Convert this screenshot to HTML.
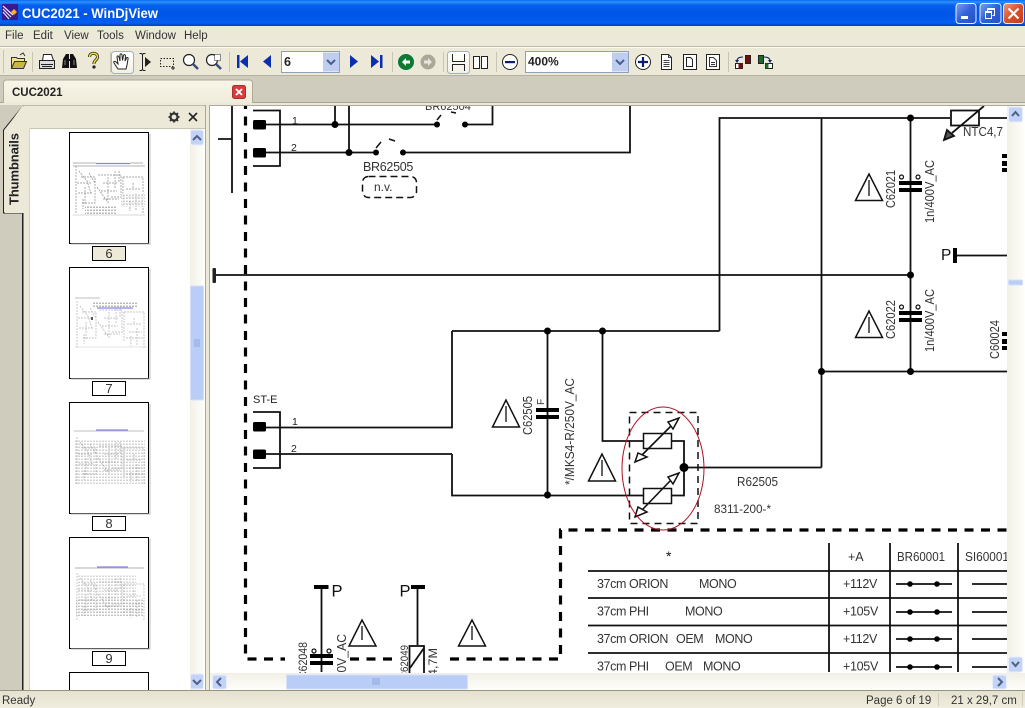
<!DOCTYPE html>
<html><head><meta charset="utf-8"><title>CUC2021 - WinDjView</title>
<style>
html,body{margin:0;padding:0;background:#ECE9D8;overflow:hidden;width:1025px;height:708px}
svg{display:block;font-family:"Liberation Sans",sans-serif;filter:blur(.3px)}
</style></head><body>
<svg width="1025" height="708" viewBox="0 0 1025 708" xmlns="http://www.w3.org/2000/svg">
<defs>
<linearGradient id="tb" x1="0" y1="0" x2="0" y2="1"><stop offset="0" stop-color="#0A6AF0"/><stop offset=".08" stop-color="#2B90FF"/><stop offset=".2" stop-color="#0560EC"/><stop offset=".55" stop-color="#0054E6"/><stop offset=".88" stop-color="#0160F2"/><stop offset="1" stop-color="#0040B0"/></linearGradient>
<linearGradient id="wb" x1="0" y1="0" x2="1" y2="1"><stop offset="0" stop-color="#7CA0EE"/><stop offset=".5" stop-color="#2F60D8"/><stop offset="1" stop-color="#2350C8"/></linearGradient>
<linearGradient id="wr" x1="0" y1="0" x2="1" y2="1"><stop offset="0" stop-color="#EE9A80"/><stop offset=".5" stop-color="#D8502A"/><stop offset="1" stop-color="#C23A18"/></linearGradient>
<linearGradient id="sv" x1="0" y1="0" x2="1" y2="0"><stop offset="0" stop-color="#F2F0E6"/><stop offset="1" stop-color="#FEFEFB"/></linearGradient>
<linearGradient id="sh" x1="0" y1="0" x2="0" y2="1"><stop offset="0" stop-color="#F2F0E6"/><stop offset="1" stop-color="#FEFEFB"/></linearGradient>
<linearGradient id="st" x1="0" y1="0" x2="0" y2="1"><stop offset="0" stop-color="#E4E1CF"/><stop offset="1" stop-color="#F0EDDE"/></linearGradient>
<linearGradient id="tab" x1="0" y1="0" x2="0" y2="1"><stop offset="0" stop-color="#F8F5E8"/><stop offset="1" stop-color="#EFECDB"/></linearGradient>
<linearGradient id="btn" x1="0" y1="0" x2="0" y2="1"><stop offset="0" stop-color="#FFFFFF"/><stop offset="1" stop-color="#F2F0E4"/></linearGradient>
<clipPath id="doc"><rect x="210" y="106" width="797" height="567"/></clipPath>
<clipPath id="list"><rect x="30" y="128" width="160" height="562"/></clipPath>
<pattern id="sp" width="3" height="3" patternUnits="userSpaceOnUse"><rect width="3" height="3" fill="#fff"/><path d="M0 .5H2M1 2V3" stroke="#999" stroke-width=".7"/></pattern>
<g id="core" fill="none" stroke="#8a8a8a" stroke-width=".7" stroke-dasharray="2 1">
<path d="M3 3V50M6 8L14 18 18 30M8 14H22V40H8M25 12H48V32M30 20H44M35 14V40M42 8V26M50 14V44M50 14H70V50M53 26H68M55 34H68M57 38V48M63 30V48M5 30H20M10 36V46M24 24L34 38M38 34H50M4 20H18M12 24V42M28 28H44M30 36H46M46 8V20M60 20V26M16 10L22 20M52 40H70"/>
</g>
</defs>

<rect width="1025" height="708" fill="#ECE9D8"/>

<!-- title bar -->
<rect width="1025" height="26" fill="url(#tb)"/>
<rect x="2" y="4" width="16" height="16" fill="#3A1A90"/>
<path d="M3 6L13 15M3 9L11 17M3 12L9 19" stroke="#E8E0FF" stroke-width="1.2" fill="none"/>
<path d="M14 9l3 3-3 3-3-3z" fill="#FFB020"/>
<text x="22" y="18" font-size="14" font-weight="bold" fill="#fff" textLength="136" lengthAdjust="spacingAndGlyphs">CUC2021 - WinDjView</text>
<rect x="956" y="3.500" width="20" height="20" rx="3" fill="url(#wb)" stroke="#E8EEFC"/>
<rect x="961" y="16" width="7" height="3" fill="#fff"/>
<rect x="980" y="3.500" width="21" height="20" rx="3" fill="url(#wb)" stroke="#E8EEFC"/>
<path d="M987.500 8.500h7v7h-2M985.500 11.500h6v7h-6zM985.500 12.500h6M987.500 8.500v3M987.500 9.500h7" fill="none" stroke="#fff"/>
<rect x="1003.500" y="3.500" width="20" height="20" rx="3" fill="url(#wr)" stroke="#F5E8E0"/>
<path d="M1008.500 8.500l10 10M1018.500 8.500l-10 10" stroke="#fff" stroke-width="2.200"/>

<!-- menu -->
<g font-size="11.500" fill="#333">
<text x="5" y="39">File</text><text x="33" y="39">Edit</text><text x="64" y="39">View</text><text x="97" y="39">Tools</text><text x="135" y="39">Window</text><text x="184" y="39">Help</text>
</g>

<!-- toolbar -->
<rect x="0" y="46" width="1025" height="1" fill="#BDB9A8"/>
<rect x="0" y="47" width="1025" height="1" fill="#FBFAF4"/>
<rect x="0" y="75" width="1025" height="1" fill="#B5B2A2"/>
<rect x="3" y="50" width="1" height="23" fill="#C8C4B2"/>
<g fill="#C8C5B2">
<rect x="32" y="52" width="1" height="20"/><rect x="110" y="52" width="1" height="20"/><rect x="229" y="52" width="1" height="20"/><rect x="392" y="52" width="1" height="20"/><rect x="443" y="52" width="1" height="20"/><rect x="496" y="52" width="1" height="20"/><rect x="728" y="52" width="1" height="20"/>
</g>
<!-- open -->
<path d="M11.500 68.500v-11h5l1 1h7v3" fill="#F5E58A" stroke="#333"/><path d="M11.500 68.500l3-7h12l-3 7z" fill="#C8B840" stroke="#333"/><path d="M20 55l3-2 2 3" fill="none" stroke="#333"/>
<!-- print -->
<path d="M39.500 60.500h15v8h-15z" fill="#ddd" stroke="#222"/><path d="M42.500 60.500l1-6h8l2 6z" fill="#fff" stroke="#222"/><path d="M41 64.500h12M42 66.500h10" stroke="#222"/>
<!-- binoc -->
<path d="M62 68l1-9 3-5h3v14zM70 68V54h3l3 5 1 9z" fill="#111"/><path d="M68 60h3" stroke="#111" stroke-width="2"/><path d="M65 60v5M74 60v5" stroke="#888"/>
<!-- help -->
<path d="M89.500 57c0-5 8-5 8 0 0 3-3 3-3.500 6v1" fill="none" stroke="#222" stroke-width="3"/><path d="M89.500 57c0-5 8-5 8 0 0 3-3 3-3.500 6v1" fill="none" stroke="#F2DE2E" stroke-width="1.500"/><circle cx="94" cy="67" r="1.600" fill="#222"/>
<!-- hand button -->
<rect x="111.500" y="51.500" width="22" height="22" rx="3" fill="url(#btn)" stroke="#9FB0C8"/>
<path d="M118 69l-4-6c-1-2 1-2 2-1l2 2-1-7c0-1.500 1.500-1.500 2 0l1 4 0-6c0-1.500 2-1.500 2 0l.5 5.500 1-5c.3-1.500 2-1 2 .5l-.5 5 1.500-3c.5-1 2-.5 1.500 1l-1 6-1 4z" fill="#fff" stroke="#222"/>
<!-- text select -->
<path d="M139.500 53.500h2l1 1 1-1h2M142.500 54.500v15M139.500 70.500h2l1-1 1 1h2" fill="none" stroke="#222"/><path d="M145 57l6 5-6 5z" fill="#222"/>
<!-- rect select -->
<rect x="160.500" y="58.500" width="13" height="8" fill="none" stroke="#222" stroke-dasharray="1.500 1.500"/><path d="M171 68h4M173 66v4" stroke="#222"/>
<!-- zoom -->
<circle cx="189" cy="60" r="5.500" fill="#fff" stroke="#222" stroke-width="1.200"/><path d="M193 64l5 5" stroke="#3C4E7A" stroke-width="2.500"/>
<!-- zoom rect -->
<circle cx="212" cy="60" r="5.500" fill="#fff" stroke="#222" stroke-width="1.200"/><path d="M216 64l5 5" stroke="#3C4E7A" stroke-width="2.500"/><rect x="214.500" y="54.500" width="6" height="6" fill="#fff" stroke="#222" stroke-dasharray="1 1"/>
<!-- nav -->
<g fill="#0A2FB0">
<rect x="237" y="55" width="2.500" height="13"/><path d="M248 55v13l-8-6.500z"/>
<path d="M271 55v13l-8-6.500z"/>
<path d="M350 55v13l8-6.500z"/>
<path d="M371 55v13l8-6.500z"/><rect x="380" y="55" width="2.500" height="13"/>
</g>
<!-- page combo -->
<rect x="281.500" y="51.500" width="58" height="21" fill="#fff" stroke="#8FA0B8"/>
<text x="284" y="66" font-size="12.500" font-weight="bold" fill="#222">6</text>
<rect x="323" y="52.500" width="16" height="19" fill="#BFCEF0"/><path d="M327 60l4 4 4-4" fill="none" stroke="#4A5F90" stroke-width="2"/>
<!-- green / grey -->
<circle cx="406" cy="62" r="7.500" fill="#0F7A2E" stroke="#074"/><path d="M402 62l4-4v2.500h4v3h-4V66z" fill="#fff"/>
<circle cx="428" cy="62" r="7.500" fill="#ABA89A"/><path d="M432 62l-4-4v2.500h-4v3h4V66z" fill="#E8E6DC"/>
<!-- continuous button -->
<rect x="447.500" y="51.500" width="22" height="22" rx="3" fill="url(#btn)" stroke="#9FB0C8"/>
<path d="M452.500 54v7.500h12V54M452.500 71v-6.500h12V71" fill="none" stroke="#222"/>
<rect x="473.500" y="56.500" width="6" height="12" fill="#fff" stroke="#222"/><rect x="481.500" y="56.500" width="6" height="12" fill="#fff" stroke="#222"/>
<!-- minus -->
<circle cx="510" cy="62" r="7.500" fill="#fff" stroke="#222"/><rect x="505" y="61" width="10" height="2.200" fill="#0A1F70"/>
<!-- zoom combo -->
<rect x="525.500" y="51.500" width="103" height="21" fill="#fff" stroke="#8FA0B8"/>
<text x="528" y="65.500" font-size="12" font-weight="bold" fill="#222">400%</text>
<rect x="612" y="52.500" width="16" height="19" fill="#BFCEF0"/><path d="M616 60l4 4 4-4" fill="none" stroke="#4A5F90" stroke-width="2"/>
<!-- plus -->
<circle cx="643" cy="62" r="7.500" fill="#fff" stroke="#222"/><path d="M638 62h10M643 57v10" stroke="#0A1F70" stroke-width="2.200"/>
<!-- docs -->
<path d="M661.500 54.500h7l3 3v12h-10z" fill="#fff" stroke="#222"/><path d="M668.500 54.500v3h3M663.500 60.500h6M663.500 62.500h6M663.500 64.500h6M663.500 66.500h6" fill="none" stroke="#444"/>
<rect x="683.500" y="54.500" width="13" height="15" fill="#fff" stroke="#222"/><path d="M686.500 57.500h4l2 2v7h-6z" fill="#fff" stroke="#222"/>
<rect x="706.500" y="54.500" width="13" height="15" fill="#fff" stroke="#222"/><path d="M709.500 57.500h4l3 3v6h-7zM711 62.500h4M711 64.500h4" fill="#fff" stroke="#333"/>
<!-- rotate -->
<rect x="745.500" y="55.500" width="5" height="8" fill="#6E1010" stroke="#222"/><rect x="735.500" y="63.500" width="7" height="5" fill="#fff" stroke="#222"/><rect x="738.500" y="63.500" width="4" height="5" fill="#6E1010"/><path d="M737 61c0-3 3-4 6-4" fill="none" stroke="#0A1F70"/><path d="M735 60h4l-2 3z" fill="#0A1F70"/>
<rect x="758.500" y="55.500" width="5" height="8" fill="#1A6A2A" stroke="#222"/><rect x="765.500" y="63.500" width="7" height="5" fill="#fff" stroke="#222"/><rect x="765.500" y="63.500" width="3" height="5" fill="#1A6A2A"/><path d="M764 57c3 0 6 1 6 4" fill="none" stroke="#0A1F70"/><path d="M768 60h4l-2 3z" fill="#0A1F70"/>

<!-- tab bar -->
<rect x="0" y="76" width="1025" height="27" fill="#CFCBBD"/>
<rect x="0" y="102" width="1025" height="1" fill="#A8A594"/>
<rect x="0" y="103" width="1025" height="3" fill="#ECE9D8"/>
<path d="M3.500 103v-20q0-3 3-3h243q3 0 3 3v20" fill="url(#tab)" stroke="#ADAA99"/>
<text x="12" y="96" font-size="11.500" font-weight="bold" fill="#222">CUC2021</text>
<rect x="232.500" y="85.500" width="13" height="13" rx="2" fill="#D83C3C" stroke="#A83030"/>
<path d="M236 89l6 6M242 89l-6 6" stroke="#fff" stroke-width="1.800"/>

<!-- sidebar -->
<rect x="0" y="105" width="206" height="585" fill="#ECE9D8"/>
<rect x="0" y="105" width="22" height="585" fill="#CFCBBD"/>
<rect x="22" y="213" width="1.500" height="477" fill="#222"/>
<path d="M23 106L3.500 130V213H22.500" fill="#ECE9D8" stroke="#222"/>
<path d="M23 105V213H5V130z" fill="#ECE9D8"/>
<text transform="translate(18.500,205) rotate(-90)" font-size="13" font-weight="bold" fill="#222" textLength="72">Thumbnails</text>
<rect x="22" y="105" width="184" height="1" fill="#BDB9A8"/>
<!-- gear -->
<circle cx="174" cy="117" r="3.500" fill="none" stroke="#333" stroke-width="2.200"/>
<path d="M174 111.500v2M174 120.500v2M168.500 117h2M177.500 117h2M170 113l1.500 1.500M178 113l-1.500 1.500M170 121l1.500-1.500M178 121l-1.500-1.500" stroke="#333" stroke-width="1.800"/>
<path d="M189 113l8 8M197 113l-8 8" stroke="#222" stroke-width="1.600"/>
<rect x="29" y="128" width="177" height="1" fill="#C8C5B4"/>
<rect x="30" y="129" width="160" height="561" fill="#fff"/>
<rect x="29" y="128" width="1" height="562" fill="#D6D3C2"/>
<g clip-path="url(#list)" font-size="13" fill="#333" text-anchor="middle">
<!-- 6 -->
<rect x="69.500" y="132.500" width="79" height="111" fill="#fff" stroke="#000"/><path d="M150 134v110H71" fill="none" stroke="#bbb"/>
<use href="#core" x="73" y="163"/>
<path d="M73 163H96M130 163H143M73 166H145" stroke="#999" stroke-width=".7"/><path d="M96 163.500H130" stroke="#8484EE" stroke-width="1.300"/>
<rect x="85" y="205" width="32" height="9" fill="url(#sp)" opacity=".9"/><path d="M73 215H145" stroke="#ccc" stroke-width=".8"/>
<rect x="121" y="193" width="24" height="14" fill="url(#sp)" opacity=".6"/>
<rect x="92.500" y="246.500" width="33" height="14" fill="#ECE9D8" stroke="#000"/><text x="109" y="258">6</text>
<!-- 7 -->
<rect x="69.500" y="267.500" width="79" height="111" fill="#fff" stroke="#000"/><path d="M150 269v110H71" fill="none" stroke="#bbb"/>
<g opacity=".65"><use href="#core" x="74" y="298"/></g>
<path d="M75 298H100" stroke="#aaa" stroke-width=".7"/><rect x="92" y="302" width="45" height="5" fill="url(#sp)" opacity=".9"/><path d="M97 308H133" stroke="#8484EE" stroke-width="1.200"/><rect x="91" y="317" width="2" height="3" fill="#555"/><path d="M75 347H147" stroke="#ddd" stroke-width=".8"/>
<rect x="92.500" y="381.500" width="33" height="14" fill="#fff" stroke="#000"/><text x="109" y="393">7</text>
<!-- 8 -->
<rect x="69.500" y="402.500" width="79" height="111" fill="#fff" stroke="#000"/><path d="M150 404v110H71" fill="none" stroke="#bbb"/>
<path d="M74 431H144" stroke="#aaa" stroke-width=".7"/><path d="M96 430H128" stroke="#8484EE" stroke-width="1.200"/>
<rect x="75" y="440" width="70" height="44" fill="url(#sp)" opacity=".55"/>
<g opacity=".7"><use href="#core" x="74" y="434"/></g>
<rect x="92.500" y="516.500" width="33" height="14" fill="#fff" stroke="#000"/><text x="109" y="528">8</text>
<!-- 9 -->
<rect x="69.500" y="537.500" width="79" height="111" fill="#fff" stroke="#000"/><path d="M150 539v110H71" fill="none" stroke="#bbb"/>
<path d="M75 568H144" stroke="#999" stroke-width=".7"/><path d="M97 567H128" stroke="#8484EE" stroke-width="1.300"/>
<rect x="78" y="574" width="58" height="24" fill="url(#sp)" opacity=".5"/><rect x="76" y="598" width="68" height="18" fill="url(#sp)" opacity=".75"/>
<g opacity=".6"><use href="#core" x="74" y="570"/></g>
<rect x="92.500" y="651.500" width="33" height="14" fill="#fff" stroke="#000"/><text x="109" y="663">9</text>

<rect x="69.500" y="672.500" width="79" height="30" fill="#fff" stroke="#000"/>
</g>
<!-- sidebar scrollbar -->
<rect x="190" y="129" width="15" height="561" fill="url(#sv)"/>
<rect x="190.500" y="130" width="13" height="15" rx="2" fill="#C3D3F8" stroke="#E8EEFC"/><path d="M193 140l4-4 4 4" fill="none" stroke="#4D6185" stroke-width="2"/>
<rect x="190.500" y="286" width="13" height="114" rx="1" fill="#B9CDF6" stroke="#D4E0FA"/>
<path d="M194 340h6M194 342h6M194 344h6M194 346h6" stroke="#8EA8DE"/>
<rect x="190.500" y="674" width="13" height="15" rx="2" fill="#C3D3F8" stroke="#E8EEFC"/><path d="M193 680l4 4 4-4" fill="none" stroke="#4D6185" stroke-width="2"/>
<rect x="205" y="105" width="1" height="585" fill="#ACA899"/>

<!-- document frame -->
<rect x="209" y="105" width="816" height="1" fill="#ACA899"/>
<rect x="209" y="105" width="1" height="585" fill="#ACA899"/>
<rect x="210" y="106" width="797" height="567" fill="#fff"/>

<!-- schematic -->
<g clip-path="url(#doc)" fill="none" stroke="#111" stroke-width="1.800">
<!-- dashed border -->
<path d="M245.500 100V659H285M350 659H392M450 659H560.500V530H1010" stroke="#000" stroke-width="3.200" stroke-dasharray="9 7.500"/>
<path d="M232 100V193M218 139H232"/>
<!-- top connector -->
<path d="M253 110.500H280V166H253" stroke-width="1.800"/>
<path d="M253 124.500H437M465 124.500H492.500V100M253 152.500H376M403 152.500H630V100M335 100V124.500M349 100V152.500"/>
<g fill="#000" stroke="none"><rect x="253" y="120" width="13" height="9.500" rx="1.500"/><rect x="253" y="148" width="13" height="9.500" rx="1.500"/>
<circle cx="335" cy="124.500" r="3.500"/><circle cx="349" cy="152.500" r="3.500"/><circle cx="437" cy="124.500" r="3"/><circle cx="465" cy="124.500" r="3"/><circle cx="376" cy="152.500" r="3"/><circle cx="403" cy="152.500" r="3"/></g>
<path d="M376 148l5-6M389 139l6 2M437 120l4-5M451 112l5 1" stroke-width="1.500"/>
<rect x="362.500" y="176.500" width="54" height="21" rx="6" stroke="#111" stroke-width="1.500" stroke-dasharray="7 4"/>
<!-- long horizontal -->
<path d="M214 275H910"/>
<rect x="212.500" y="268" width="3.500" height="15" fill="#222" stroke="none" rx="1"/>
<!-- main net -->
<path d="M719.500 331V118H950M980 118H1007M452 331H719.500M452 331V427.500H265M452 454V495.500H643M265 454H452M547.500 331V495.500M602.500 331V441H643M671 441H684V495.500H671M684 467.500H821.500M821.500 118V467.500M821.500 371.500H1007M910.500 118V371.500M956 255.500H1007"/>
<g fill="#000" stroke="none">
<circle cx="547.500" cy="331" r="3.500"/><circle cx="602.500" cy="331" r="3.500"/><circle cx="547.500" cy="495" r="3.500"/><circle cx="684" cy="467.500" r="4.500"/><circle cx="821.500" cy="371.500" r="3.500"/><circle cx="910.500" cy="371.500" r="3.500"/><circle cx="910.500" cy="118" r="3.500"/><circle cx="910.500" cy="275" r="3.500"/>
<rect x="953" y="248" width="4" height="15"/>
<rect x="253" y="422" width="13" height="9.500" rx="1.500"/><rect x="253" y="449.500" width="13" height="9.500" rx="1.500"/>
<rect x="899" y="181" width="23" height="4"/><rect x="899" y="188" width="23" height="4"/><rect x="899" y="311" width="23" height="4"/><rect x="899" y="318" width="23" height="4"/>
<rect x="536" y="408" width="23" height="4"/><rect x="536" y="415" width="23" height="4"/>
<rect x="1002" y="154" width="5" height="4"/><rect x="1002" y="161" width="5" height="5"/><rect x="1002" y="168" width="5" height="4"/>
<rect x="1002" y="332" width="5" height="4"/><rect x="1002" y="339" width="5" height="5"/><rect x="1002" y="346" width="5" height="4"/>
</g>
<path d="M253 412H280V468H253"/>
<g stroke-width="1.200"><circle cx="901.500" cy="177" r="2"/><circle cx="918" cy="177" r="2"/><circle cx="901.500" cy="307" r="2"/><circle cx="918" cy="307" r="2"/></g>
<!-- NTC -->
<rect x="951" y="110.500" width="28" height="15" fill="#fff"/>
<path d="M984 106L952 133"/><path d="M944 140l3-10 7 6z" fill="#555"/>
<!-- triangles -->
<g stroke-width="1.500" fill="#fff">
<path d="M869 174L855.500 200.500H882.500z"/><path d="M869 311L855.500 337.500H882.500z"/><path d="M506 400L492.500 427H519.500z"/><path d="M602 454L588.500 481H615.500z"/><path d="M362 620L349 646H376z"/><path d="M472 620L458.500 646H485.500z"/>
</g>
<path d="M869 180V196M869 317V333M506 406V422M602 460V476M362 626V640M472 626V640" stroke-width="1.300"/>
<!-- resistors -->
<rect x="643.500" y="433.500" width="28" height="15" fill="#fff" stroke-width="1.500"/>
<rect x="643.500" y="488.500" width="28" height="15" fill="#fff" stroke-width="1.500"/>
<path d="M671 426L642 455M671 480L642 510" stroke-width="1.600"/>
<path d="M679 418L668 422L673 429zM635 462L638 453L647 457zM679 473L668 477L673 484zM635 517L638 507L647 512z" fill="#fff" stroke-width="1.500"/>
<rect x="629.500" y="412.500" width="68.500" height="111" stroke-width="1.500" stroke-dasharray="7 5"/>
<ellipse cx="663" cy="468.500" rx="41" ry="61.500" stroke="#B01024" stroke-width="1"/>
<!-- bottom parts -->
<path d="M321.500 587V672M417.500 587V645"/>
<g fill="#000" stroke="none"><rect x="314" y="585" width="14.500" height="4"/><rect x="411" y="585" width="14" height="4"/>
<rect x="310" y="654" width="23" height="4"/><rect x="310" y="661" width="23" height="4"/></g>
<g stroke-width="1.200"><circle cx="314" cy="651" r="2"/><circle cx="329" cy="651" r="2"/></g>
<rect x="409.500" y="646" width="14.500" height="30" fill="#fff"/><path d="M410 668L424 648"/>
<!-- table -->
<path d="M588 571H1007M588 598H1007M588 625.500H1007M588 653H1007"/>
<path d="M829 543V672M890 543V672M958 543V672"/>
<path d="M896 584H952M896 612H952M896 639H952M896 667H952M972 584H1007M972 612H1007M972 639H1007M972 667H1007"/>
<g fill="#000" stroke="none"><circle cx="910" cy="584" r="2.800"/><circle cx="937" cy="584" r="2.800"/><circle cx="910" cy="612" r="2.800"/><circle cx="937" cy="612" r="2.800"/><circle cx="910" cy="639" r="2.800"/><circle cx="937" cy="639" r="2.800"/><circle cx="910" cy="667" r="2.800"/><circle cx="937" cy="667" r="2.800"/></g>
<!-- text -->
<g stroke="none" fill="#333" font-size="12.500">
<text x="425" y="110" font-size="11">BR62504</text>
<text x="292" y="124" font-size="10.500" fill="#222">1</text><text x="291" y="151" font-size="10.500" fill="#222">2</text>
<text x="363" y="171" font-size="12.500" letter-spacing="-.3">BR62505</text>
<text x="374" y="191" font-size="12">n.v.</text>
<text x="253" y="403" font-size="11" fill="#222">ST-E</text>
<text x="292" y="425" font-size="10.500" fill="#222">1</text><text x="291" y="452" font-size="10.500" fill="#222">2</text>
<text x="737" y="486" font-size="12.500" textLength="41" lengthAdjust="spacingAndGlyphs">R62505</text>
<text x="714" y="513" font-size="11.500" textLength="57" lengthAdjust="spacingAndGlyphs">8311-200-*</text>
<text x="963" y="136" font-size="12.500" textLength="40" lengthAdjust="spacingAndGlyphs">NTC4,7</text>
<text x="941" y="260" font-size="15.500" fill="#111">P</text>
<text x="331.500" y="596.500" font-size="16.500" fill="#111">P</text>
<text x="399.500" y="596.500" font-size="16.500" fill="#111">P</text>
<text transform="translate(532,435) rotate(-90)" font-size="13" textLength="39" lengthAdjust="spacingAndGlyphs">C62505</text>
<text transform="translate(544,405) rotate(-90)" font-size="10">F</text>
<text transform="translate(574,485) rotate(-90)" font-size="13" textLength="107" lengthAdjust="spacingAndGlyphs">*/MKS4-R/250V_AC</text>
<text transform="translate(895,208) rotate(-90)" font-size="13" textLength="38" lengthAdjust="spacingAndGlyphs">C62021</text>
<text transform="translate(934,223) rotate(-90)" font-size="13" textLength="63" lengthAdjust="spacingAndGlyphs">1n/400V_AC</text>
<text transform="translate(895,339) rotate(-90)" font-size="13" textLength="39" lengthAdjust="spacingAndGlyphs">C62022</text>
<text transform="translate(934,352) rotate(-90)" font-size="13" textLength="63" lengthAdjust="spacingAndGlyphs">1n/400V_AC</text>
<text transform="translate(999,359) rotate(-90)" font-size="13" textLength="39" lengthAdjust="spacingAndGlyphs">C60024</text>
<text transform="translate(307,679) rotate(-90)" font-size="12" textLength="37" lengthAdjust="spacingAndGlyphs">C62048</text>
<text transform="translate(346,686) rotate(-90)" font-size="12.500" textLength="52" lengthAdjust="spacingAndGlyphs">400V_AC</text>
<text transform="translate(408,679) rotate(-90)" font-size="11" textLength="34" lengthAdjust="spacingAndGlyphs">C62049</text>
<text transform="translate(437,676) rotate(-90)" font-size="12" textLength="28" lengthAdjust="spacingAndGlyphs">4,7M</text>
<text x="666" y="561" font-size="14" fill="#111">*</text>
<text x="848" y="561">+A</text>
<text x="897" y="561" textLength="48" lengthAdjust="spacingAndGlyphs">BR60001</text>
<text x="965" y="561" textLength="44" lengthAdjust="spacingAndGlyphs">SI60001</text>
<text x="597" y="588" letter-spacing="-.4">37cm ORION</text><text x="699" y="588" letter-spacing="-.4">MONO</text>
<text x="597" y="615.500" letter-spacing="-.4">37cm PHI</text><text x="685" y="615.500" letter-spacing="-.4">MONO</text>
<text x="597" y="643" letter-spacing="-.4">37cm ORION</text><text x="676" y="643" letter-spacing="-.4">OEM</text><text x="715" y="643" letter-spacing="-.4">MONO</text>
<text x="597" y="670.500" letter-spacing="-.4">37cm PHI</text><text x="665" y="670.500" letter-spacing="-.4">OEM</text><text x="703" y="670.500" letter-spacing="-.4">MONO</text>
<text x="843" y="588" letter-spacing="-.3">+112V</text><text x="843" y="615.500" letter-spacing="-.3">+105V</text><text x="843" y="643" letter-spacing="-.3">+112V</text><text x="843" y="670.500" letter-spacing="-.3">+105V</text>
</g>
</g>

<!-- doc scrollbars -->
<rect x="1007" y="106" width="18" height="567" fill="url(#sv)"/>
<rect x="1008.500" y="107" width="14" height="15" rx="2" fill="#C3D3F8" stroke="#E8EEFC"/><path d="M1012 116l3.500-4 3.500 4" fill="none" stroke="#4D6185" stroke-width="2"/>
<rect x="1008.500" y="280" width="14" height="5" rx="1" fill="#B9CDF6" stroke="#D4E0FA"/>
<rect x="1008.500" y="657" width="14" height="15" rx="2" fill="#C3D3F8" stroke="#E8EEFC"/><path d="M1012 662l3.500 4 3.500-4" fill="none" stroke="#4D6185" stroke-width="2"/>
<rect x="210" y="673" width="815" height="17" fill="url(#sh)"/>
<rect x="212.500" y="675" width="14" height="14" rx="2" fill="#C3D3F8" stroke="#E8EEFC"/><path d="M221 678l-4 4 4 4" fill="none" stroke="#4D6185" stroke-width="2"/>
<rect x="286.500" y="675" width="181" height="14" rx="1" fill="#B9CDF6" stroke="#D4E0FA"/>
<path d="M373 678v7M375 678v7M377 678v7M379 678v7" stroke="#8EA8DE"/>
<rect x="992.500" y="675" width="14" height="14" rx="2" fill="#C3D3F8" stroke="#E8EEFC"/><path d="M998 678l4 4-4 4" fill="none" stroke="#4D6185" stroke-width="2"/>

<!-- status -->
<rect x="0" y="690" width="1025" height="18" fill="url(#st)"/>
<rect x="0" y="690" width="1025" height="1" fill="#96937F"/>
<g font-size="11.500" fill="#333">
<text x="2" y="704">Ready</text>
<text x="866" y="704">Page 6 of 19</text>
<text x="951" y="704">21 x 29,7 cm</text>
</g>
<rect x="938" y="693" width="1" height="13" fill="#CFCCB8"/>
<rect x="1022" y="693" width="1" height="13" fill="#CFCCB8"/>
</svg>
</body></html>
